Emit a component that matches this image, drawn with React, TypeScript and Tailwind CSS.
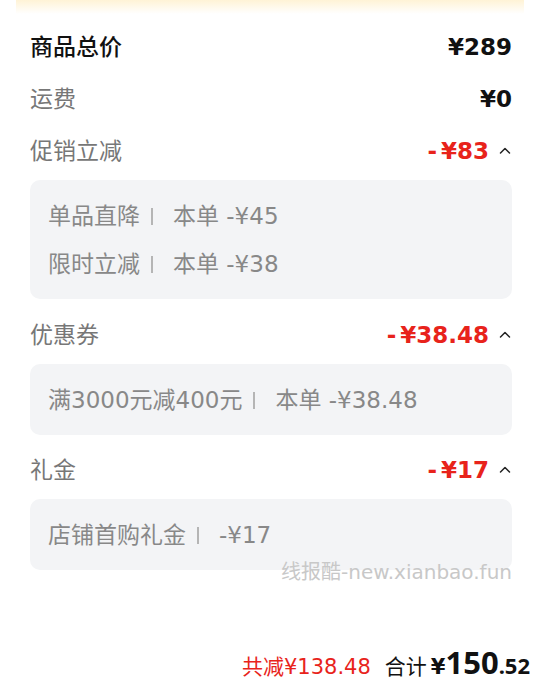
const font = "font-['DejaVu_Sans','Noto_Sans_CJK_SC',sans-serif]";
const noto = "font-['Noto_Sans','Noto_Sans_CJK_SC',sans-serif]";

type Detail = { name: string; amount: string };

function Chevron() {
  return (
    <svg width="14" height="14" viewBox="0 0 14 14" className="ml-[9px]">
      <path d="M2.5 9 L7 4.5 L11.5 9" fill="none" stroke="#222" strokeWidth="1.5" strokeLinecap="round" strokeLinejoin="round" />
    </svg>
  );
}

function Row({ label, value, strong }: { label: string; value: string; strong?: boolean }) {
  return (
    <div className="flex h-[52px] items-center justify-between">
      <span className={strong ? 'text-[23px] font-medium text-[#111]' : 'text-[23px] text-[#777]'}>{label}</span>
      <span className="text-[23px] font-bold text-[#111]">{value}</span>
    </div>
  );
}

function DiscountBlock({ label, value, details, mt }: { label: string; value: string; details: Detail[]; mt: string }) {
  return (
    <div className={mt}>
      <div className="flex h-[52px] items-center justify-between">
        <span className="text-[23px] text-[#777]">{label}</span>
        <span className="flex items-center text-[23px] font-bold text-[#e8231b]">
          <span>-</span>
          <span className="ml-[4px]">{value}</span>
          <Chevron />
        </span>
      </div>
      <div className="mt-[3px] rounded-[10px] bg-[#f3f4f6] pb-[11px] pl-[18px] pt-[12px]">
        {details.map((d) => (
          <div key={d.name} className="flex h-[48px] items-center text-[23px] text-[#888]">
            <span>{d.name}</span>
            <span className="ml-[11px] mr-[20px] h-[17px] w-[2px] bg-[#b5b5b5]" />
            <span>{d.amount}</span>
          </div>
        ))}
      </div>
    </div>
  );
}

export default function App() {
  return (
    <div className={`relative h-[688px] w-[540px] overflow-hidden bg-white ${font}`}>
      <div className="mx-[16px] h-[14px] bg-gradient-to-b from-[#fff3d6] to-white" />
      <div className="mt-[7px] pl-[30px] pr-[28px]">
        <Row label="商品总价" value="¥289" strong />
        <Row label="运费" value="¥0" />
        <DiscountBlock
          label="促销立减"
          value="¥83"
          mt=""
          details={[
            { name: '单品直降', amount: '本单 -¥45' },
            { name: '限时立减', amount: '本单 -¥38' },
          ]}
        />
        <DiscountBlock
          label="优惠券"
          value="¥38.48"
          mt="mt-[10px]"
          details={[{ name: '满3000元减400元', amount: '本单 -¥38.48' }]}
        />
        <div className="relative">
          <DiscountBlock
            label="礼金"
            value="¥17"
            mt="mt-[9px]"
            details={[{ name: '店铺首购礼金', amount: '-¥17' }]}
          />
          <span className="absolute -bottom-[17px] right-0 text-[20px] text-[#c8c8c8]">线报酷-new.xianbao.fun</span>
        </div>
      </div>
      <div className="mt-[77px] flex items-baseline justify-end pr-[10px]">
        <span className="text-[21px] text-[#e8231b]">共减¥138.48</span>
        <span className="ml-[14px] text-[21px] text-[#111]">合计</span>
        <span className="ml-[4px] text-[21px] font-bold text-[#111]">¥</span>
        <span className={`text-[31px] font-bold leading-none text-[#111] ${noto}`}>150</span>
        <span className={`text-[22px] font-bold text-[#111] ${noto}`}>.52</span>
      </div>
    </div>
  );
}
